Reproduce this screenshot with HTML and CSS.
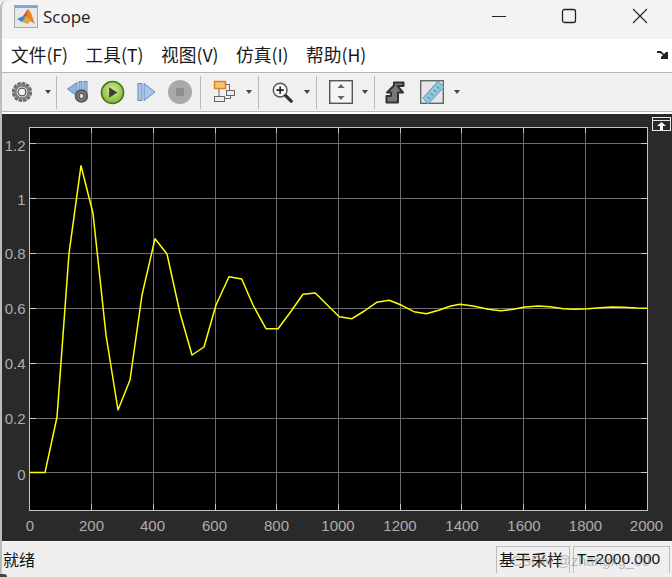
FILE: index.html
```html
<!DOCTYPE html>
<html lang="zh-CN">
  <head>
    <meta charset="UTF-8" />
    <title>Scope</title>
    <link rel="stylesheet" href="styles.css">
  </head>
  <body>
    <div class="window">
      <div class="titlebar">
        <svg class="app-icon" width="24" height="23" viewBox="0 0 24 23">
          <rect x="0.5" y="0.5" width="23" height="22" fill="#e8e8e8" stroke="#a8a8a8" />
          <rect x="1" y="1" width="22" height="2" fill="#7fa6cf" />
          <path d="M3 14 L9 11 L12 12 L8 17 Z" fill="#3f87c4" />
          <path d="M9 11 L14 4 L16 7 L12 12 Z" fill="#c9542a" />
          <path d="M14 4 L17 8 L21 19 L16 16 L12 12 Z" fill="#e8832c" />
          <path d="M12 12 L16 16 L14 19 L8 17 Z" fill="#d9a53a" />
        </svg>
        <span class="title">Scope</span>
        <div class="win-buttons">
          <svg width="16" height="16" viewBox="0 0 16 16"><path d="M2 8.5 H16" stroke="#222" fill="none" /></svg>
          <svg width="16" height="16" viewBox="0 0 16 16"><rect x="1.5" y="1.5" width="13" height="13" rx="2" stroke="#222" stroke-width="1.3" fill="none" /></svg>
          <svg width="16" height="16" viewBox="0 0 16 16"><path d="M1 1 L15 15 M15 1 L1 15" stroke="#222" stroke-width="1.1" fill="none" /></svg>
        </div>
      </div>

      <div class="menubar">
        <span>文件(F)</span>
        <span>工具(T)</span>
        <span>视图(V)</span>
        <span>仿真(I)</span>
        <span>帮助(H)</span>
        <svg class="dock-arrow" width="12" height="10" viewBox="0 0 12 10">
          <path d="M0 1 L4 1 L7 4 L9 2 L11 2 L11 9 L4 9 L4 7 L6 5 L3 3 L0 3 Z" fill="#222" />
        </svg>
      </div>

      <div class="toolbar">
        <svg class="tool ml9" width="22" height="22" viewBox="0 0 24 24">
          <circle cx="12" cy="12" r="8.5" fill="none" stroke="#666" stroke-width="5" stroke-dasharray="3.4 1" />
          <circle cx="12" cy="12" r="7.5" fill="none" stroke="#808080" stroke-width="3" />
          <circle cx="12" cy="12" r="4.2" fill="#f0f0f0" stroke="#555" stroke-width="1.4" />
        </svg>
        <i class="caret ml12"></i>
        <i class="sep ml5"></i>
        <svg class="tool ml10" width="24" height="24" viewBox="0 0 24 24">
          <path d="M0.5 9 L10 2.5 L10 16 Z" fill="#8fb4dc" stroke="#5f8ec2" />
          <rect x="12" y="1.5" width="3" height="11" fill="#a5c3e3" stroke="#5f8ec2" />
          <rect x="17" y="1.5" width="3" height="11" fill="#a5c3e3" stroke="#5f8ec2" />
          <circle cx="14.5" cy="16" r="6" fill="#777" stroke="#555" stroke-width="1.5" />
          <circle cx="14.5" cy="16" r="2.5" fill="#ddd" stroke="#444" />
        </svg>
        <svg class="tool ml9" width="25" height="25" viewBox="0 0 26 26">
          <defs>
            <radialGradient id="play" cx="50%" cy="40%" r="60%">
              <stop offset="0" stop-color="#d8ef9c" />
              <stop offset="1" stop-color="#7fb52e" />
            </radialGradient>
          </defs>
          <circle cx="13" cy="13" r="11.5" fill="url(#play)" stroke="#44771c" stroke-width="1.6" />
          <path d="M9.5 7.5 L18 13 L9.5 18.5 Z" fill="#3d3d3d" />
        </svg>
        <svg class="tool ml12" width="19" height="20" viewBox="0 0 19 20">
          <rect x="1" y="1.5" width="4" height="17" fill="#a9c8e8" stroke="#5f8ec2" />
          <path d="M7 1.5 L18 10 L7 18.5 Z" fill="#a9c8e8" stroke="#5f8ec2" />
        </svg>
        <svg class="tool ml12" width="24" height="24" viewBox="0 0 24 24">
          <circle cx="12" cy="12" r="12" fill="#a9a9a9" />
          <rect x="8" y="8" width="8" height="8" fill="#8d8d8d" />
        </svg>
        <i class="sep ml8"></i>
        <svg class="tool ml11" width="24" height="24" viewBox="0 0 24 24">
          <rect x="2.5" y="1.5" width="11" height="7" fill="#f5c27c" stroke="#e07f1f" stroke-width="1.5" />
          <path d="M14 4.5 H17.5 V10 M18.5 15 V18.5 H13 M7 9 V16" stroke="#666" fill="none" />
          <rect x="14.5" y="10.5" width="8" height="5" fill="#eee" stroke="#666" />
          <rect x="2.5" y="16.5" width="10" height="5" fill="#eee" stroke="#666" />
        </svg>
        <i class="caret ml10"></i>
        <i class="sep ml6"></i>
        <svg class="tool ml12" width="22" height="22" viewBox="0 0 24 24">
          <circle cx="10" cy="10" r="7.5" fill="#f6f6f6" stroke="#555" stroke-width="1.6" />
          <path d="M6 10 H14 M10 6 V14" stroke="#222" stroke-width="1.8" />
          <path d="M16 16 L22 22" stroke="#333" stroke-width="3.6" stroke-linecap="round" />
        </svg>
        <i class="caret ml11"></i>
        <i class="sep ml6"></i>
        <svg class="tool ml12" width="24" height="24" viewBox="0 0 24 24">
          <rect x="0.7" y="0.7" width="22.6" height="22.6" fill="#f4f4f4" stroke="#555" stroke-width="1.4" />
          <path d="M12 4 L15.5 8 H8.5 Z M12 20 L15.5 16 H8.5 Z" fill="#666" />
        </svg>
        <i class="caret ml9"></i>
        <i class="sep ml6"></i>
        <svg class="tool ml10" width="20" height="23" viewBox="0 0 20 23">
          <path d="M1.5 21.5 V15 H6 V11.5 H2 L9 4.5 V1.5 H18.5 V5 H12.5 L18 11.5 H13 V21.5 Z" fill="#777" stroke="#333" stroke-width="2" stroke-linejoin="round" />
        </svg>
        <svg class="tool ml15" width="24" height="24" viewBox="0 0 24 24">
          <rect x="0.7" y="0.7" width="22.6" height="22.6" fill="#e6e6e6" stroke="#666" stroke-width="1.4" />
          <path d="M3 18 L18 1 L24 7 L8 24 Z" fill="#8ec4de" stroke="#5b97b8" />
          <path d="M8 17 L10 19 M11 13.5 L13 15.5 M14 10 L16 12 M17 6.5 L19 8.5" stroke="#3f6f88" />
        </svg>
        <i class="caret ml10"></i>
      </div>

      <div class="gap"></div>

      <div class="scope-panel">
        <svg class="scope-plot" width="670" height="427" viewBox="2 114 670 427">
          <rect x="29.5" y="127.5" width="618" height="383" fill="#000" />
          <g class="grid">
            <path d="M91.5 127 V510 M153.5 127 V510 M215.5 127 V510 M276.5 127 V510 M338.5 127 V510 M400.5 127 V510 M461.5 127 V510 M523.5 127 V510 M585.5 127 V510" />
            <path d="M30 143.5 H647 M30 198.5 H647 M30 253.5 H647 M30 308.5 H647 M30 363.5 H647 M30 418.5 H647 M30 472.5 H647" />
          </g>
          <rect class="axes-box" x="29.5" y="127.5" width="618" height="383" />
          <path class="ticks" d="M91.5 510 V504 M153.5 510 V504 M215.5 510 V504 M276.5 510 V504 M338.5 510 V504 M400.5 510 V504 M461.5 510 V504 M523.5 510 V504 M585.5 510 V504 M91.5 127 V133 M153.5 127 V133 M215.5 127 V133 M276.5 127 V133 M338.5 127 V133 M400.5 127 V133 M461.5 127 V133 M523.5 127 V133 M585.5 127 V133 M30 143.5 H36 M30 198.5 H36 M30 253.5 H36 M30 308.5 H36 M30 363.5 H36 M30 418.5 H36 M30 472.5 H36 M647 143.5 H641 M647 198.5 H641 M647 253.5 H641 M647 308.5 H641 M647 363.5 H641 M647 418.5 H641 M647 472.5 H641" />
          <polyline class="signal" points="30,472.6 45,472.6 57,417 69,253.3 81,165.7 93,213.3 106,335 118,410 130,380 142,295 155,238.7 167,254 180,313 192,355 204,347 216,305 229,276.7 241.7,279 253,305 266,328.7 278,328.7 290.7,311.7 303,294.3 315.3,293 327.3,305 339.3,316.7 352,318.7 364.3,311 376.7,302.3 389.3,300.3 401.7,305.3 414,311.7 426.3,313.7 438.7,310.3 450.7,306 460,304.3 473.3,306 488.3,309.3 500.7,310.7 513.3,309.3 525,307 538.3,306 550,306.7 563.3,308.7 575,309.3 588.3,308.7 600,307.7 611.7,307 623.3,307.3 636.7,308 647,308.3" />
          <g class="ylabels">
            <text x="25.5" y="151">1.2</text>
            <text x="25.5" y="205">1</text>
            <text x="25.5" y="259">0.8</text>
            <text x="25.5" y="314">0.6</text>
            <text x="25.5" y="369">0.4</text>
            <text x="25.5" y="424">0.2</text>
            <text x="25.5" y="480">0</text>
          </g>
          <g class="xlabels">
            <text x="30" y="531">0</text>
            <text x="91.5" y="531">200</text>
            <text x="152.5" y="531">400</text>
            <text x="214.5" y="531">600</text>
            <text x="276.5" y="531">800</text>
            <text x="338" y="531">1000</text>
            <text x="400" y="531">1200</text>
            <text x="462" y="531">1400</text>
            <text x="524" y="531">1600</text>
            <text x="585.5" y="531">1800</text>
            <text x="646.5" y="531">2000</text>
          </g>
          <g class="expand">
            <rect x="652.5" y="117.5" width="18" height="13" />
            <path d="M653 120.5 H670" />
            <path class="arrow" d="M661.5 122 L666 126 H663 V130 H660 V126 H657 Z" />
          </g>
        </svg>
      </div>

      <div class="statusbar">
        <span class="status-text">就绪</span>
        <span class="status-cell mode">基于采样</span>
        <span class="status-cell time">T=2000.000</span>
        <span class="watermark">CSDN @zhangxg_00</span>
      </div>
      <i class="corner"></i>
    </div>
  </body>
</html>
```

FILE: styles.css
```css
html,
body {
  margin: 0;
  height: 100%;
  background: #f0f0f0;
}

body {
  overflow: hidden;
  font-family: "Noto Sans CJK SC", "Liberation Sans", sans-serif;
}

.window {
  position: relative;
  width: 672px;
  height: 577px;
  box-sizing: border-box;
  border-left: 2px solid #bdbdbd;
  border-top-left-radius: 8px;
  display: flex;
  flex-direction: column;
  background: #f3f3f3;
}

.titlebar {
  height: 39px;
  display: flex;
  align-items: center;
  flex-shrink: 0;
}

.app-icon {
  margin-left: 12px;
  margin-top: -7px;
}

.title {
  margin-left: 5px;
  margin-top: -6px;
  font-family: "Open Sans", "Noto Sans", sans-serif;
  font-size: 17px;
  color: #222;
}

.win-buttons {
  margin-left: auto;
  margin-top: -7px;
  margin-right: 24px;
  display: flex;
  gap: 55px;
}

.menubar {
  height: 33px;
  display: flex;
  align-items: center;
  background: #fff;
  padding-left: 9px;
  gap: 17.5px;
  font-size: 17.7px;
  color: #1a1a1a;
  flex-shrink: 0;
  border-bottom: 1px solid #b4b4b4;
}

.menubar span {
  line-height: 33px;
  margin-top: -2px;
}

.dock-arrow {
  margin-left: auto;
  margin-right: 3px;
  margin-top: -2px;
}

.toolbar {
  height: 38px;
  display: flex;
  align-items: center;
  background: #f0f0f0;
  border-bottom: 1px solid #b4b4b4;
  flex-shrink: 0;
}

.tool {
  flex-shrink: 0;
}

.caret {
  width: 0;
  height: 0;
  border-left: 3.5px solid transparent;
  border-right: 3.5px solid transparent;
  border-top: 4px solid #444;
  flex-shrink: 0;
}

.sep {
  width: 1px;
  height: 33px;
  background: #b9b9b9;
  flex-shrink: 0;
}

.ml5 { margin-left: 5px; }
.ml6 { margin-left: 6px; }
.ml8 { margin-left: 8px; }
.ml9 { margin-left: 9px; }
.ml10 { margin-left: 10px; }
.ml11 { margin-left: 11px; }
.ml12 { margin-left: 12px; }
.ml15 { margin-left: 15px; }

.gap {
  height: 2px;
  background: #fff;
  flex-shrink: 0;
}

.scope-panel {
  height: 427px;
  background: #2a2a2a;
  flex-shrink: 0;
}

.scope-plot {
  display: block;
}

.grid path {
  stroke: #6e6e6e;
  fill: none;
}

.axes-box {
  fill: none;
  stroke: #c4c4c4;
}

.ticks {
  stroke: #c4c4c4;
  fill: none;
}

.signal {
  fill: none;
  stroke: #ffff00;
  stroke-width: 1.5;
  stroke-linejoin: round;
}

.ylabels text,
.xlabels text {
  font-family: "Liberation Sans", sans-serif;
  font-size: 15px;
  fill: #aeaeae;
}

.ylabels text {
  text-anchor: end;
}

.xlabels text {
  text-anchor: middle;
}

.expand rect {
  fill: #2a2a2a;
  stroke: #e8e8e8;
}

.expand path {
  stroke: #e8e8e8;
  fill: none;
}

.expand .arrow {
  fill: #fff;
  stroke: none;
}

.statusbar {
  flex: 1;
  display: flex;
  align-items: flex-start;
  background: #efefef;
  font-size: 16px;
  color: #111;
  border-top: 1px solid #fafafa;
}

.status-text {
  margin-left: 1px;
  margin-top: 5px;
}

.status-cell {
  height: 27px;
  margin-top: 4px;
  box-sizing: border-box;
  border: 1px solid #bcbcbc;
  border-bottom: none;
  line-height: 24px;
  padding-left: 2px;
}

.mode {
  margin-left: auto;
  width: 74px;
}

.time {
  margin-left: 3px;
  margin-right: 2px;
  width: 97px;
  padding-left: 3px;
  font-family: "Liberation Sans", sans-serif;
  font-size: 15.5px;
  white-space: nowrap;
}

.watermark {
  position: absolute;
  right: 22px;
  bottom: 8px;
  font-family: "Liberation Sans", sans-serif;
  font-size: 14.5px;
  color: rgba(130, 130, 130, 0.5);
}

.corner {
  position: absolute;
  left: -2px;
  bottom: 0;
  width: 7px;
  height: 3px;
  background: #444;
  border-top-right-radius: 3px;
}
```
